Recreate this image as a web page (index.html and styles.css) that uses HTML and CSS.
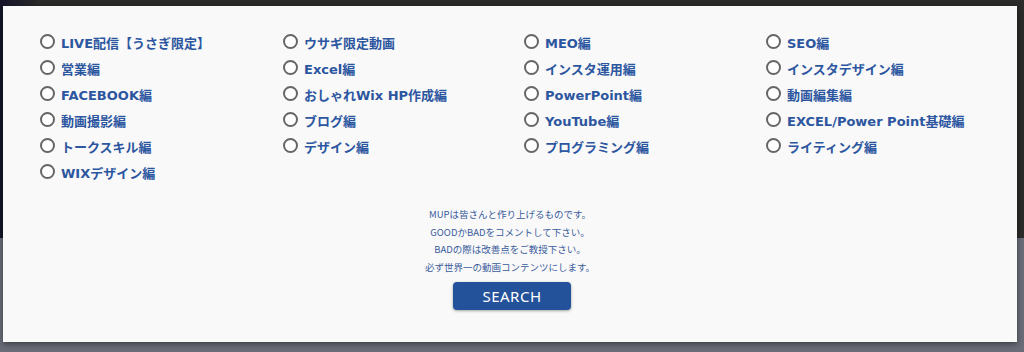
FILE: index.html
```html
<!DOCTYPE html>
<html lang="ja">
<head>
  <meta charset="UTF-8">
  <meta name="viewport" content="width=device-width, initial-scale=1.0">
  <title>MUP 動画検索</title>
  <link rel="stylesheet" href="styles.css">
</head>
<body>

  <div class="backdrop">
    <div class="backdrop-top"></div>
    <div class="backdrop-bottom"></div>
  </div>

  <main class="panel">
    <form class="search-form">
      <div class="category-grid">
        <label class="category"><input type="radio" name="cat"><span>LIVE配信【うさぎ限定】</span></label>
        <label class="category"><input type="radio" name="cat"><span>ウサギ限定動画</span></label>
        <label class="category"><input type="radio" name="cat"><span>MEO編</span></label>
        <label class="category"><input type="radio" name="cat"><span>SEO編</span></label>

        <label class="category"><input type="radio" name="cat"><span>営業編</span></label>
        <label class="category"><input type="radio" name="cat"><span>Excel編</span></label>
        <label class="category"><input type="radio" name="cat"><span>インスタ運用編</span></label>
        <label class="category"><input type="radio" name="cat"><span>インスタデザイン編</span></label>

        <label class="category"><input type="radio" name="cat"><span>FACEBOOK編</span></label>
        <label class="category"><input type="radio" name="cat"><span>おしゃれWix HP作成編</span></label>
        <label class="category"><input type="radio" name="cat"><span>PowerPoint編</span></label>
        <label class="category"><input type="radio" name="cat"><span>動画編集編</span></label>

        <label class="category"><input type="radio" name="cat"><span>動画撮影編</span></label>
        <label class="category"><input type="radio" name="cat"><span>ブログ編</span></label>
        <label class="category"><input type="radio" name="cat"><span>YouTube編</span></label>
        <label class="category"><input type="radio" name="cat"><span>EXCEL/Power Point基礎編</span></label>

        <label class="category"><input type="radio" name="cat"><span>トークスキル編</span></label>
        <label class="category"><input type="radio" name="cat"><span>デザイン編</span></label>
        <label class="category"><input type="radio" name="cat"><span>プログラミング編</span></label>
        <label class="category"><input type="radio" name="cat"><span>ライティング編</span></label>

        <label class="category"><input type="radio" name="cat"><span>WIXデザイン編</span></label>
      </div>

      <div class="message">
        <p>MUPは皆さんと作り上げるものです。</p>
        <p>GOODかBADをコメントして下さい。</p>
        <p>BADの際は改善点をご教授下さい。</p>
        <p>必ず世界一の動画コンテンツにします。</p>
      </div>

      <button type="button" class="search-button">SEARCH</button>
    </form>
  </main>

</body>
</html>
```

FILE: styles.css
```css
html,
body {
  margin: 0;
  padding: 0;
  height: 100%;
}

body {
  position: relative;
  overflow: hidden;
  font-family: "DejaVu Sans", "Noto Sans CJK JP", sans-serif;
  background-color: #6a6d78;
}

/* page behind the modal */
.backdrop {
  position: absolute;
  inset: 0;
  display: flex;
  flex-direction: column;
}

.backdrop-top {
  height: 238px;
  background: linear-gradient(90deg, #14142a 0%, #2b2b29 4%, #2b2b29 100%);
}

.backdrop-bottom {
  flex: 1;
  background-color: #6a6d78;
}

.panel {
  position: relative;
  margin: 6px 7px 0 3px;
  height: 336px;
  box-sizing: border-box;
  background-color: #f9f9f9;
  box-shadow: 0 2px 6px rgba(0, 0, 0, 0.45);
  padding: 23px 0 0 35px;
}

.search-form {
  display: flex;
  flex-direction: column;
}

.category-grid {
  display: grid;
  grid-template-columns: 243px 241px 242px 241px;
  grid-auto-rows: 26px;
}

.category {
  display: flex;
  align-items: center;
  gap: 6px;
  height: 26px;
  font-size: 13px;
  font-weight: bold;
  color: #2c56a0;
  white-space: nowrap;
  cursor: pointer;
}

.category input {
  appearance: none;
  -webkit-appearance: none;
  margin: 0 0 2px 2px;
  width: 15px;
  height: 15px;
  box-sizing: border-box;
  border: 2px solid #666;
  border-radius: 50%;
  background-color: #fff;
}

.message {
  margin: 21px 35px 0 0;
  text-align: center;
  font-family: "Noto Sans CJK JP", "Noto Sans", sans-serif;
  font-size: 9.5px;
  color: #3a5c9c;
}

.message p {
  margin: 0;
  line-height: 17.5px;
}

.search-button {
  align-self: center;
  margin: 6px 31px 0 0;
  width: 118px;
  height: 28px;
  border: none;
  border-radius: 4px;
  background-color: #24529a;
  color: #fff;
  font-family: "Noto Sans", sans-serif;
  font-size: 15px;
  letter-spacing: 0.5px;
  box-shadow: 0 1px 3px rgba(0, 0, 0, 0.35);
  cursor: pointer;
}

.search-button:hover {
  background-color: #1c447f;
}
```
